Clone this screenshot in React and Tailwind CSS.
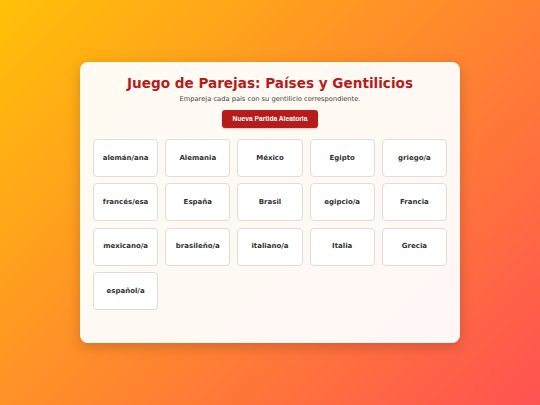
export default function App() {
  const items = [
    "alemán/ana", "Alemania", "México", "Egipto", "griego/a",
    "francés/esa", "España", "Brasil", "egipcio/a", "Francia",
    "mexicano/a", "brasileño/a", "italiano/a", "Italia", "Grecia",
    "español/a",
  ];
  return (
    <div className="w-[540px] h-[405px] flex items-center justify-center bg-[linear-gradient(135deg,#ffc107,#ff5252)]">
      <div className="w-[380px] h-[281px] rounded-[8px] bg-white/95 shadow-[0_4px_14px_rgba(0,0,0,0.18)] px-[13px] pt-[12px] flex flex-col items-center">
        <h1 className="text-[13.6px] leading-[18px] font-bold text-[#b71c1c] [font-family:'DejaVu_Sans',sans-serif]">
          Juego de Parejas: Países y Gentilicios
        </h1>
        <p className="mt-[2px] text-[6.7px] leading-[10px] text-[#444] [font-family:'DejaVu_Sans',sans-serif]">
          Empareja cada país con su gentilicio correspondiente.
        </p>
        <button className="mt-[6px] w-[96px] h-[18px] rounded-[3px] bg-[#b71c1c] text-white text-[6.7px] font-bold [font-family:'Liberation_Sans',Arial,sans-serif] shadow-[0_1px_2px_rgba(0,0,0,0.2)]">
          Nueva Partida Aleatoria
        </button>
        <div className="mt-[11px] w-full grid grid-cols-5 gap-x-[7px] gap-y-[6.3px]">
          {items.map((t) => (
            <div
              key={t}
              className="h-[38px] rounded-[4px] bg-white border border-[#e2dcd8] flex items-center justify-center text-[7px] font-bold text-[#333] [font-family:'DejaVu_Sans',sans-serif]"
            >
              {t}
            </div>
          ))}
        </div>
      </div>
    </div>
  );
}
